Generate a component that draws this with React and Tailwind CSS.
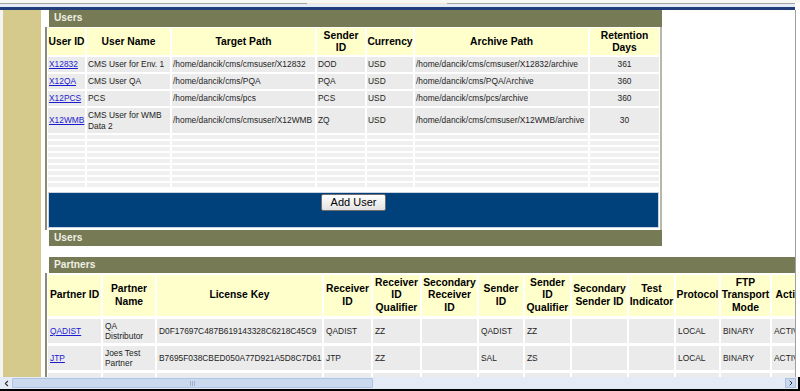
import { ChevronLeft, ChevronRight } from "lucide-react";

const users = [
  ["X12832", "CMS User for Env. 1", "/home/dancik/cms/cmsuser/X12832", "DOD", "USD", "/home/dancik/cms/cmsuser/X12832/archive", "361"],
  ["X12QA", "CMS User QA", "/home/dancik/cms/PQA", "PQA", "USD", "/home/dancik/cms/PQA/Archive", "360"],
  ["X12PCS", "PCS", "/home/dancik/cms/pcs", "PCS", "USD", "/home/dancik/cms/pcs/archive", "360"],
  ["X12WMB", "CMS User for WMB Data 2", "/home/dancik/cms/cmsuser/X12WMB", "ZQ", "USD", "/home/dancik/cms/cmsuser/X12WMB/archive", "30"],
];

const userHeads = ["User ID", "User Name", "Target Path", "Sender ID", "Currency", "Archive Path", "Retention Days"];

const partnerHeads = [
  "Partner ID",
  "Partner Name",
  "License Key",
  "Receiver ID",
  "Receiver ID Qualifier",
  "Secondary Receiver ID",
  "Sender ID",
  "Sender ID Qualifier",
  "Secondary Sender ID",
  "Test Indicator",
  "Protocol",
  "FTP Transport Mode",
  "Active",
];

const partners = [
  ["QADIST", "QA Distributor", "D0F17697C487B619143328C6218C45C9", "QADIST", "ZZ", "", "QADIST", "ZZ", "", "", "LOCAL", "BINARY", "ACTIVE"],
  ["JTP", "Joes Test Partner", "B7695F038CBED050A77D921A5D8C7D61", "JTP", "ZZ", "", "SAL", "ZS", "", "", "LOCAL", "BINARY", "ACTIVE"],
  ["", "", "", "", "", "", "", "", "", "", "", "", ""],
];

const PanelTitle = ({ children }) => (
  <div className="ml-[4px] h-[16px] bg-[#767a55] pl-[5px] flex items-center text-[10.2px] font-bold text-[#efefe4] leading-none">
    {children}
  </div>
);

const App = () => {
  return (
    <div
      className="w-[800px] h-[391px] flex flex-col bg-white overflow-hidden"
      style={{ fontFamily: '"Liberation Sans", Arial, sans-serif' }}
    >
      {/* window top edge */}
      <div className="h-[10px] flex flex-col shrink-0">
        <div className="h-[3px] bg-[#f7f7f4]" />
        <div className="h-[1px] flex">
          <div className="w-[307px] bg-[#a4a4a4]" />
          <div className="w-[140px] bg-[#efe9d6]" />
          <div className="w-[348px] bg-[#a4a4a4]" />
          <div className="flex-1 bg-white" />
        </div>
        <div className="h-[3px] flex">
          <div className="w-[795px] bg-[#e6ecf5]" />
          <div className="flex-1 bg-white" />
        </div>
        <div className="h-[3px] flex">
          <div className="w-[795px] bg-[#223d7c]" />
          <div className="flex-1 bg-white" />
        </div>
      </div>

      <div className="flex h-[367px] shrink-0">
        <div className="w-[3px] bg-[#f4f4f2]" />
        <div className="w-[38px] bg-[#d5c98b]" />

        <div className="ml-[4px] w-[750px] overflow-hidden flex flex-col">
          {/* Users panel */}
          <div className="w-[617px] shrink-0">
            <div className="ml-[4px] h-[17px] bg-[#767a55] pl-[5px] flex items-center text-[10.2px] font-bold text-[#efefe4] leading-none">
              Users
            </div>
            <div className="border-l-2 border-[#8a8a78] border-r-2 border-r-[#b8b8a8] pl-[1px] pr-[1px] pt-[1px] pb-[2px]">
              <div className="grid grid-cols-[37px_83px_143px_48px_46px_173px_69px] gap-[2px]">
                {userHeads.map((h) => (
                  <div
                    key={h}
                    className="h-[27px] bg-[#ffffcc] flex items-center justify-center text-center text-[10.3px] font-bold leading-[12px] text-black"
                  >
                    {h}
                  </div>
                ))}
                {users.map((row, r) =>
                  row.map((c, i) => (
                    <div
                      key={r + "-" + i}
                      className={
                        (r === 3 ? "h-[25px] " : "h-[15px] ") +
                        "bg-[#ebebeb] flex items-center text-[8.4px] leading-[10.5px] text-[#1e1e1e] " +
                        (i === 6 ? "justify-center" : i === 1 ? "pl-[1px]" : "pl-[1px] whitespace-nowrap")
                      }
                    >
                      {i === 0 ? (
                        <a href="#" className="text-[#1a1ad0] underline">
                          {c}
                        </a>
                      ) : (
                        <span>{c}</span>
                      )}
                    </div>
                  ))
                )}
                {Array.from({ length: 9 }).map((_, r) =>
                  userHeads.map((h) => <div key={"e" + r + h} className="h-[4px] bg-[#f0f0f0]" />)
                )}
              </div>

              <div className="mt-[5px] h-[36px] bg-[#00417b] border border-[#c8d2e0] flex justify-center pt-[1px]">
                <button className="h-[17px] w-[65px] rounded-[2px] border border-[#6e6e6e] bg-gradient-to-b from-white to-[#e2e2e2] text-[11px] text-black leading-none">
                  Add User
                </button>
              </div>
            </div>
            <PanelTitle>Users</PanelTitle>
          </div>

          <div className="h-[11px] shrink-0" />

          {/* Partners panel */}
          <div className="shrink-0">
            <PanelTitle>Partners</PanelTitle>
            <div className="border-l-2 border-[#8a8a78] pl-[1px] pt-[2px] w-[820px]">
              <div className="grid grid-cols-[53px_52px_165px_47px_47px_55px_44px_45px_55px_45px_43px_49px_38px] gap-x-[2px] gap-y-[3px]">
                {partnerHeads.map((h) => (
                  <div
                    key={h}
                    className="h-[41px] bg-[#ffffcc] flex items-center justify-center text-center text-[10.3px] font-bold leading-[12.5px] text-black"
                  >
                    {h}
                  </div>
                ))}
                {partners.map((row, r) =>
                  row.map((c, i) => (
                    <div
                      key={"p" + r + "-" + i}
                      className="h-[24px] bg-[#ebebeb] flex items-center pl-[2px] text-[8.4px] leading-[10.5px] text-[#1e1e1e]"
                    >
                      {i === 0 && c ? (
                        <a href="#" className="text-[#1a1ad0] underline">
                          {c}
                        </a>
                      ) : (
                        <span className={i === 1 ? "" : "whitespace-nowrap"}>{c}</span>
                      )}
                    </div>
                  ))
                )}
              </div>
            </div>
          </div>
        </div>

        <div className="w-[1px] bg-[#a0a0a0]" />
        <div className="flex-1 bg-white" />
      </div>

      {/* horizontal scrollbar */}
      <div className="h-[12px] shrink-0 flex items-center bg-[#e4ebf6] border-r-2 border-black">
        <div className="w-[12px] flex items-center justify-center text-[#333]">
          <ChevronLeft size={9} strokeWidth={3} />
        </div>
        <div className="w-[361px] h-[10px] bg-[#cbd9ef] border border-[#b0c4e4] rounded-[1px] flex items-center justify-center">
          <div className="flex gap-[1px]">
            <div className="w-[1px] h-[5px] bg-[#9ab0d4]" />
            <div className="w-[1px] h-[5px] bg-[#9ab0d4]" />
            <div className="w-[1px] h-[5px] bg-[#9ab0d4]" />
          </div>
        </div>
        <div className="flex-1" />
        <div className="w-[11px] h-[10px] mr-[2px] bg-[#c9d8ef] border border-[#aebfdc] flex items-center justify-center text-[#333]">
          <ChevronRight size={8} strokeWidth={3} />
        </div>
      </div>
      <div className="h-[2px] bg-black shrink-0" />
    </div>
  );
};

export default App;
